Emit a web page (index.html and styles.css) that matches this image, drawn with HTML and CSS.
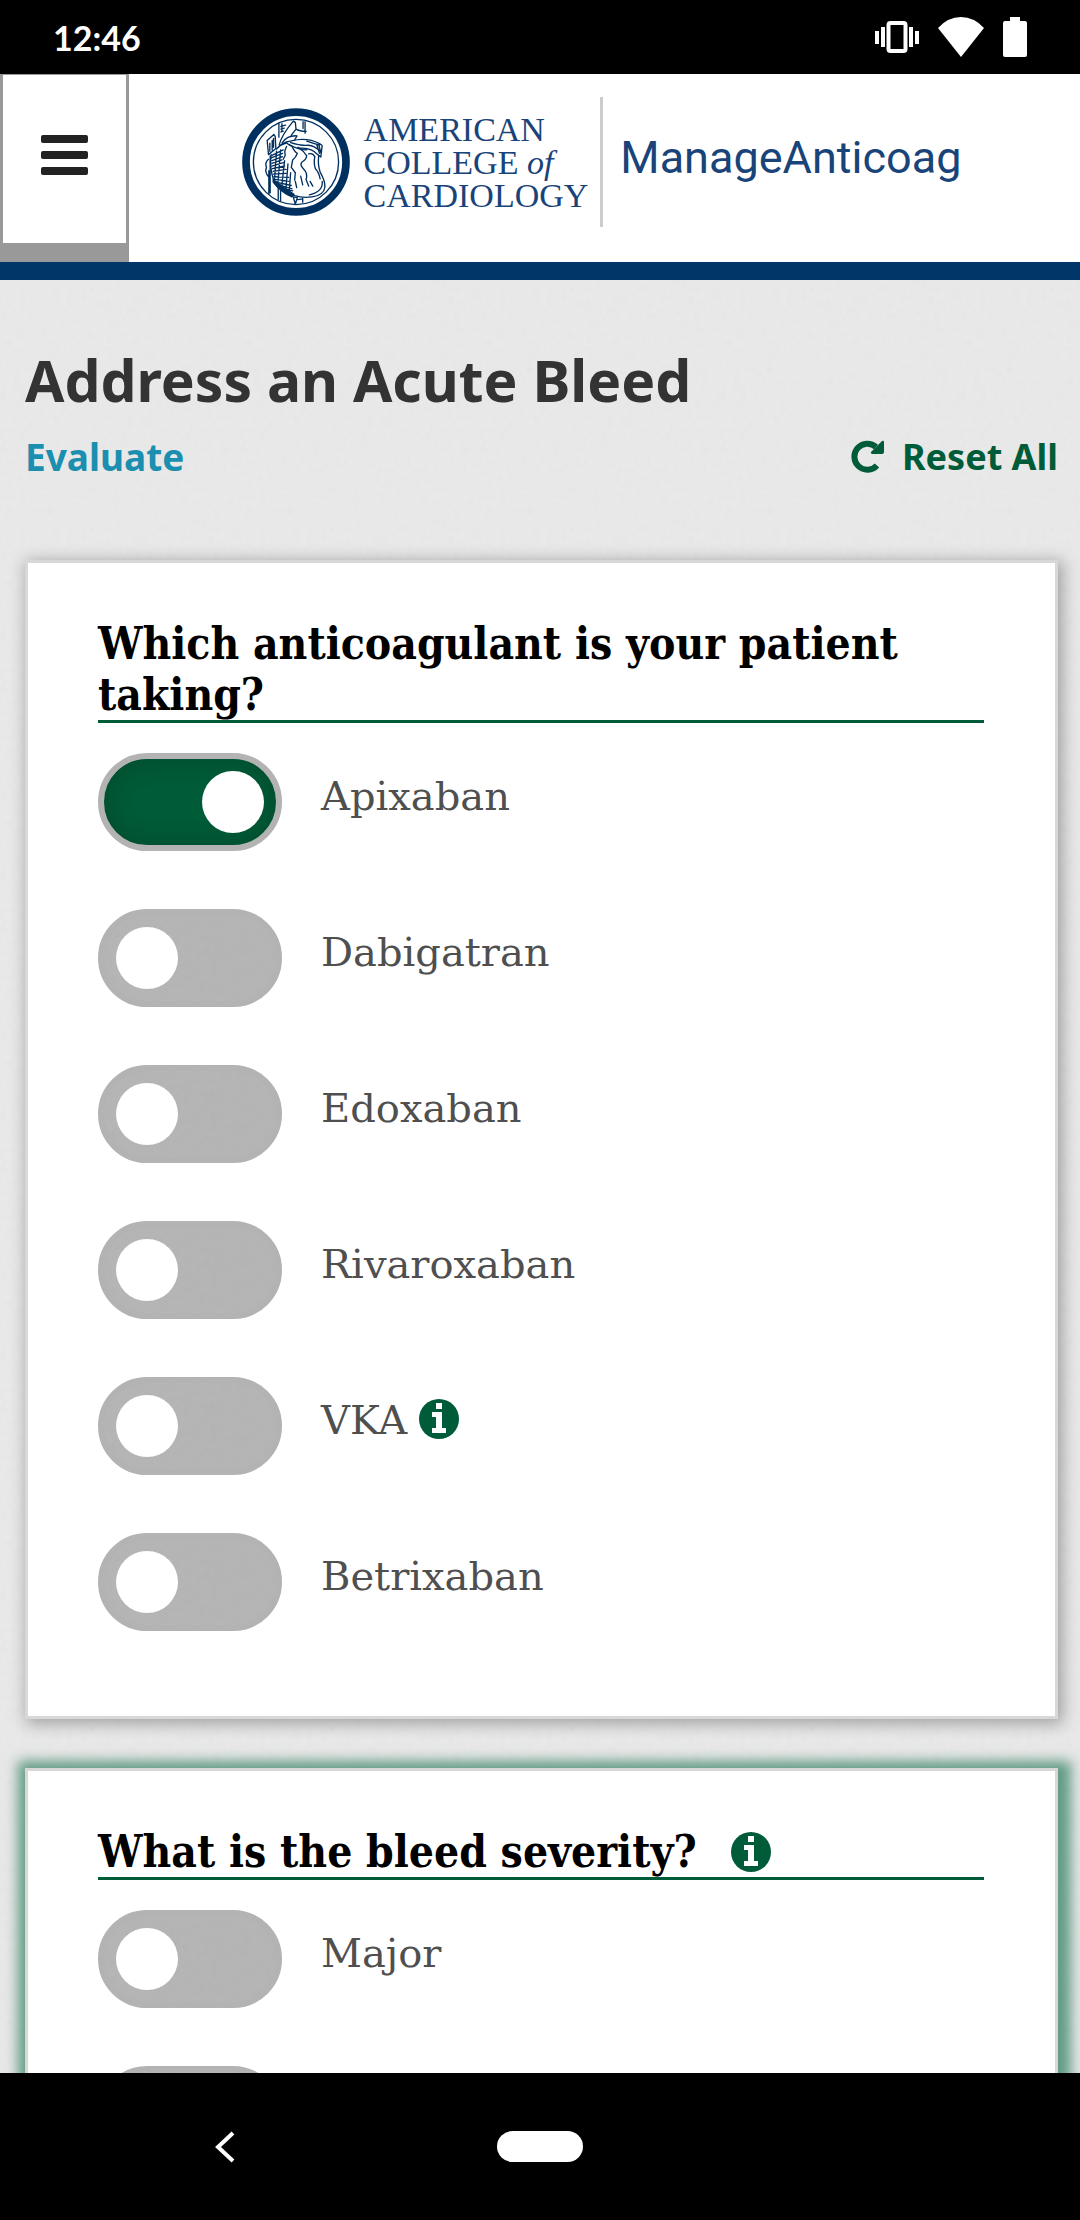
FILE: index.html
```html
<!DOCTYPE html>
<html lang="en">
<head>
<meta charset="utf-8">
<meta name="viewport" content="width=device-width, initial-scale=1">
<title>ManageAnticoag</title>
<link rel="stylesheet" href="styles.css">
</head>
<body>
<svg width="0" height="0" class="defs" aria-hidden="true">
  <symbol id="info" viewBox="0 0 40 40">
    <circle cx="20" cy="20" r="20" fill="#005c38"/>
    <path d="M17 4h6v6h-6zM13 13h10v16h4v5H13v-5h4V18h-4z" fill="#fff"/>
  </symbol>
</svg>

<div class="status">
  <span class="time">12:46</span>
  <div class="status-icons">
    <svg width="44" height="32" viewBox="0 0 44 32" fill="#fff"><path d="M0 10h4v13H0zM6 6h4v20H6zM34 6h4v20h-4zM40 10h4v13h-4z"/><rect x="13.500" y="2" width="17" height="28" rx="2" fill="none" stroke="#fff" stroke-width="4"/></svg>
    <svg width="46" height="40" viewBox="0 0 46 40" fill="#fff"><path d="M0 11Q10 0 23 0t23 11L23 40z"/></svg>
    <svg width="24" height="40" viewBox="0 0 24 40" fill="#fff"><path d="M7 0h10v4h5q2 0 2 2v32q0 2-2 2H2q-2 0-2-2V6q0-2 2-2h5z"/></svg>
  </div>
</div>

<header class="header">
  <button class="menu" type="button" aria-label="Menu"><span class="bar"></span><span class="bar"></span><span class="bar"></span></button>
  <div class="brand">
    <svg class="seal" viewBox="47 43 322 322" fill="none" stroke="#00305f" stroke-width="4" stroke-linecap="round" stroke-linejoin="round" aria-hidden="true">
      <circle cx="208" cy="204" r="149" stroke-width="23"/>
      <circle cx="208" cy="204" r="127" stroke-width="4"/>
      <path d="M157 88v42M166 90v24M163 98l14-4M163 106l10-3M163 114l7-2M235 84v34M229 84v20M158 152q8-30 42-70l6 4 2 20q10 6 30 7M167 146q16-22 44-20l-8 14M208 106l-14 18"/>
      <path d="M122 140l20-18 4 6 2 36-22 18zM130 148v24M137 140v28M141 134v26"/>
      <path d="M150 165q14-20 44-24 46-12 84 8l8 6-4 34-8-6q-20-22-52-20-26-2-42-16-16 4-30 18zM192 146q30 10 52 8 20 2 34 16M188 152q24 16 52 16M240 142q18 6 38 12M270 152l8 26M276 152l6 24" />
      <path d="M276 184q-4 26 4 50 16 28 14 46-4 24-38 28-28 4-52-4-30-12-62-44-14-40-8-78M286 262q4 30-38 40"/>
      <path d="M136 184l34-16M134 192l34-14M136 200l32-12M136 208l30-10M136 216l34-10M138 224l36-8M140 232l38-6M140 240l38-2M142 248l44 2M144 256l46 6M148 264l46 10M156 272l40 12M166 282l32 8M150 172l-6 84M162 168l-8 100M174 200l-8 72M184 210l-6 74M192 236l-4 54" stroke-width="4"/>
      <path d="M140 256q28 22 62 44l-6 8q-34-14-56-44z" fill="#00305f"/>
      <path d="M126 196q-12 10-6 24-6 14 6 28M131 186v110M127 230v70M155 276v40M162 284v36M200 308l6 22 6-20zM228 312v12M214 316l14-2" />
      <path d="M180 158q-8 12-4 26l-6 12M196 156q6 16 16 22-4 12-14 20l-4 22 12 16-2 22M214 160q16 10 26 26-2 12-14 18-8 8 4 20 14 14 8 32l8 20M246 180q12-4 18 8-4 22 2 36 10 10 14 30M206 262l4 18M222 246l6 26M250 262l8 14" stroke-width="4"/>
    </svg>
    <div class="college">AMERICAN<br>COLLEGE <em>of</em><br>CARDIOLOGY</div>
    <div class="product">ManageAnticoag</div>
  </div>
</header>

<main class="main">
  <h1>Address an Acute Bleed</h1>
  <div class="subhead">
    <a href="#evaluate">Evaluate</a>
    <button class="reset" type="button">
      <svg width="33" height="33" viewBox="0 0 33 33" fill="none" aria-hidden="true"><path d="M26 25.500A13 13 0 1 1 25 7" stroke="#005c38" stroke-width="6"/><path d="M31 1q2-1 2 1v10q0 2-2 2H21q-2-1-1-2z" fill="#005c38"/></svg>
      Reset All
    </button>
  </div>

  <section class="card" id="evaluate">
    <h2>Which anticoagulant is your patient taking?</h2>
    <div class="options">
      <div class="option"><input type="checkbox" id="apixaban" checked><label for="apixaban">Apixaban</label></div>
      <div class="option"><input type="checkbox" id="dabigatran"><label for="dabigatran">Dabigatran</label></div>
      <div class="option"><input type="checkbox" id="edoxaban"><label for="edoxaban">Edoxaban</label></div>
      <div class="option"><input type="checkbox" id="rivaroxaban"><label for="rivaroxaban">Rivaroxaban</label></div>
      <div class="option"><input type="checkbox" id="vka"><label for="vka">VKA</label><button class="info" type="button" aria-label="About VKA"><svg><use href="#info"/></svg></button></div>
      <div class="option"><input type="checkbox" id="betrixaban"><label for="betrixaban">Betrixaban</label></div>
    </div>
  </section>

  <section class="card card-active">
    <h2 class="with-info">What is the bleed severity? <button class="info" type="button" aria-label="About bleed severity"><svg><use href="#info"/></svg></button></h2>
    <div class="options">
      <div class="option"><input type="checkbox" id="major"><label for="major">Major</label></div>
      <div class="option"><input type="checkbox" id="second" aria-label="Second severity"></div>
    </div>
  </section>
</main>

<nav class="navbar">
  <button class="back" type="button" aria-label="Back"><svg width="20" height="32" viewBox="0 0 20 32" fill="none" stroke="#fff" stroke-width="4"><path d="M18 2L3 16l15 14"/></svg></button>
  <button class="home" type="button" aria-label="Home"></button>
</nav>
</body>
</html>
```
FILE: styles.css
```css
:root {
  --green: #005c38;
  --grain: url("data:image/svg+xml,%3Csvg xmlns='http://www.w3.org/2000/svg' width='240' height='240'%3E%3Cfilter id='n'%3E%3CfeTurbulence type='fractalNoise' baseFrequency='.15' numOctaves='3' stitchTiles='stitch'/%3E%3C/filter%3E%3Crect width='240' height='240' filter='url(%23n)' opacity='.06'/%3E%3C/svg%3E");
}
* { box-sizing: border-box; }
body {
  margin: 0;
  height: 100vh;
  display: flex;
  flex-direction: column;
  overflow: hidden;
  background: #000;
  font-family: "Noto Sans", sans-serif;
}
button { border: 0; padding: 0; background: none; font: inherit; color: inherit; }
svg { display: block; }
.defs { position: absolute; }

.status {
  flex: none;
  height: 74px;
  padding: 0 53px;
  display: flex;
  align-items: center;
  justify-content: space-between;
  color: #fff;
}
.time { font: 700 34px/40px Lato, sans-serif; padding-top: 2px; }
.status-icons { display: flex; align-items: center; gap: 19px; }

.header {
  flex: none;
  height: 206px;
  display: flex;
  background: #fff;
  border-bottom: 18px solid #003768;
}
.menu {
  width: 129px;
  border: 3px solid #999;
  border-top-width: 1px;
  border-bottom-width: 19px;
  background: #fff;
  display: flex;
  flex-direction: column;
  align-items: center;
  justify-content: center;
  gap: 8px;
  padding-bottom: 8px;
}
.bar { width: 47px; height: 8px; border-radius: 2px; background: #222; }
.brand {
  flex: 1;
  display: flex;
  align-items: center;
  justify-content: center;
  padding: 0 6px 12px 0;
  color: #194479;
}
.seal { width: 108px; height: 108px; }
.college {
  margin: 0 12px 0 14px;
  font: 34px/33px "Liberation Serif", serif;
  white-space: nowrap;
}
.product {
  height: 130px;
  padding: 0 0 8px 17px;
  display: flex;
  align-items: center;
  border-left: 3px solid #ccc;
  font: 45px/54px Roboto, sans-serif;
}

.main {
  flex: 1;
  min-height: 0;
  overflow: hidden;
  padding: 60px 22px 0 25px;
  background: #e9e9e9 var(--grain);
}
h1 { margin: 0; font-size: 57px; line-height: 80px; color: #333; }
.subhead {
  display: flex;
  justify-content: space-between;
  align-items: center;
  height: 72px;
  margin-bottom: 68px;
  font-size: 36px;
  font-weight: 700;
}
.subhead a { color: #1a8fb0; text-decoration: none; font-size: 37px; }
.reset { display: flex; align-items: center; gap: 18px; color: var(--green); }

.card {
  margin-bottom: 49px;
  padding: 55px 71px 85px 70px;
  background: #fff;
  border: 3px solid #d8d8d8;
  box-shadow: 3px 3px 15px 2px rgba(0, 0, 0, .3);
}
.card-active { box-shadow: 3px 3px 12px 10px rgba(0, 100, 60, .58); }
h2 {
  margin: 0 0 30px;
  border-bottom: 3px solid var(--green);
  font: 700 44px/51px "Roboto Slab", "DejaVu Serif Condensed", "DejaVu Serif", serif;
  color: #000;
}
.with-info { display: flex; align-items: center; gap: 34px; }
.options { display: grid; gap: 58px; }
.option {
  display: flex;
  align-items: center;
  height: 98px;
  font: 40px/52px "Roboto Slab", "DejaVu Serif", serif;
  color: #4f4f4f;
}
.option label { margin: 0 12px 12px 39px; }
.option .info { margin-bottom: 14px; }
.info svg { width: 40px; height: 40px; }
.option input {
  appearance: none;
  flex: none;
  width: 184px;
  height: 98px;
  margin: 0;
  padding: 0 12px;
  display: flex;
  align-items: center;
  border: 6px solid #b3b3b3;
  border-radius: 49px;
  background: #b5b5b5 var(--grain);
}
.option input::before {
  content: "";
  width: 62px;
  height: 62px;
  border-radius: 50%;
  background: #fff;
}
.option input:checked {
  justify-content: flex-end;
  background: var(--green);
  box-shadow: inset 0 0 30px rgba(0, 30, 15, .3);
}

.navbar {
  flex: none;
  height: 147px;
  display: grid;
  grid-template-columns: 1fr auto 1fr;
  align-items: center;
}
.back { justify-self: center; margin-right: 48px; }
.home { grid-column: 2; width: 86px; height: 31px; border-radius: 16px; background: #fff; }
```
